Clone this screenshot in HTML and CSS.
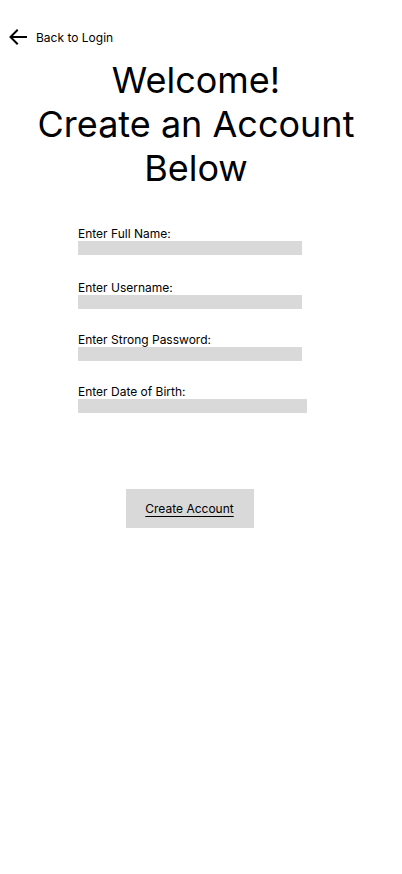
FILE: index.html
```html
<!DOCTYPE html>
<html lang="en">
<head>
<meta charset="utf-8">
<title>Create Account</title>
<link rel="stylesheet" href="styles.css">
</head>
<body>
<div class="page">
  <a class="back" href="#">
    <svg class="back-icon" width="18" height="16" viewBox="0 0 18 16" fill="none" stroke="#000" stroke-width="2" stroke-linecap="square">
      <path d="M17 8H2"/>
      <path d="M8 1.5L1.5 8L8 14.5"/>
    </svg>
    <span>Back to Login</span>
  </a>
  <h1 class="title">Welcome!<br>Create an Account<br>Below</h1>
  <form class="form">
    <label class="field f1"><span class="label">Enter Full Name:</span><span class="input"></span></label>
    <label class="field f2"><span class="label">Enter Username:</span><span class="input"></span></label>
    <label class="field f3"><span class="label">Enter Strong Password:</span><span class="input"></span></label>
    <label class="field f4"><span class="label">Enter Date of Birth:</span><span class="input wide"></span></label>
    <div class="actions">
      <button type="button" class="btn">Create Account</button>
    </div>
  </form>
</div>
</body>
</html>
```
FILE: styles.css
```css
* { box-sizing: border-box; }
html, body { margin: 0; padding: 0; background: #fff; }
body { font-family: Inter, "Noto Sans", sans-serif; color: #000; }
.page { width: 402px; min-height: 874px; padding-top: 29px; }
.back { display: flex; align-items: center; gap: 9px; padding-left: 9px; color: #000; text-decoration: none; font-size: 12px; height: 16px; }
.back-icon { display: block; }
.title { margin: 13px 0 0; font-weight: 400; font-size: 36px; line-height: 44px; text-align: center; padding-right: 10px; }
.form { display: flex; flex-direction: column; padding-left: 78px; margin-top: 36px; }
.field { display: flex; flex-direction: column; }
.label { font-size: 12px; line-height: 15px; height: 15px; }
.input { display: block; width: 224px; height: 14px; background: #d9d9d9; }
.input.wide { width: 229px; }
.f2 { margin-top: 25px; }
.f3 { margin-top: 23px; }
.f4 { margin-top: 23px; }
.actions { margin-top: 76px; padding-left: 48px; }
.btn { width: 128px; height: 39px; border: 0; background: #d9d9d9; font-family: Inter, "Noto Sans", sans-serif; font-size: 12px; color: #000; text-decoration: underline; text-underline-offset: 3px; padding: 0 1px 0 0; cursor: pointer; }
```
